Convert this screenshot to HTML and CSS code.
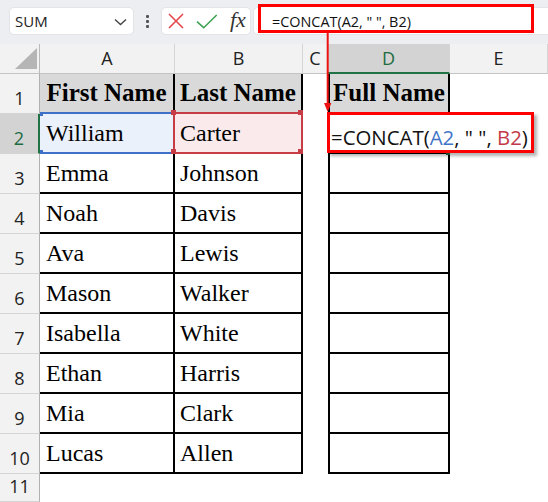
FILE: index.html
```html
<!DOCTYPE html>
<html>
<head>
<meta charset="utf-8">
<link rel="stylesheet" href="styles.css">
</head>
<body>
<div class="app">
  <div class="toolbar">
    <div class="namebox">
      <span>SUM</span>
      <svg class="chev" width="13" height="8" viewBox="0 0 13 8"><path d="M1 1.5 L6.5 6.5 L12 1.5" fill="none" stroke="#444" stroke-width="1.4"/></svg>
    </div>
    <div class="dots"><i></i><i></i><i></i></div>
    <div class="fxbox">
      <svg class="xi" width="16" height="16" viewBox="0 0 16 16"><path d="M1 1 L15 15 M15 1 L1 15" stroke="#e4474c" stroke-width="1.6"/></svg>
      <svg class="ok" width="22" height="15" viewBox="0 0 22 15"><path d="M1 7.7 L7.7 13.7 L20.7 1" fill="none" stroke="#3ea352" stroke-width="1.6"/></svg>
      <span class="fx">fx</span>
    </div>
    <div class="formula">
      <div class="fbox">=CONCAT(A2, " ", B2)</div>
    </div>
  </div>

  <div class="sheet">
    <div class="corner"><svg width="40" height="30" viewBox="0 0 40 30"><path d="M37 4 L37 25 L15 25 Z" fill="#b5b5b5"/></svg></div>
    <div class="ch">A</div>
    <div class="ch">B</div>
    <div class="ch">C</div>
    <div class="ch sel">D</div>
    <div class="ch">E</div>

    <div class="rh">1</div>
    <div class="cell ta hd a1">First Name</div>
    <div class="cell tb hd b1">Last Name</div>
    <div class="cell"></div>
    <div class="cell td hd">Full Name</div>
    <div class="cell"></div>

    <div class="rh rsel">2</div>
    <div class="cell ta a2">William<i class="bh btl"></i><i class="bh bbl"></i></div>
    <div class="cell tb b2">Carter<i class="h tl"></i><i class="h tr"></i><i class="h bl"></i><i class="h br"></i></div>
    <div class="cell"></div>
    <div class="cell td d2">
      <i class="fill"></i>
      <div class="callout">=CONCAT(<span class="rb">A2</span>, " ", <span class="rr">B2</span>)</div>
    </div>
    <div class="cell"></div>

    <div class="rh">3</div>
    <div class="cell ta">Emma</div>
    <div class="cell tb">Johnson</div>
    <div class="cell"></div>
    <div class="cell td"></div>
    <div class="cell"></div>

    <div class="rh">4</div>
    <div class="cell ta">Noah</div>
    <div class="cell tb">Davis</div>
    <div class="cell"></div>
    <div class="cell td"></div>
    <div class="cell"></div>

    <div class="rh">5</div>
    <div class="cell ta">Ava</div>
    <div class="cell tb">Lewis</div>
    <div class="cell"></div>
    <div class="cell td"></div>
    <div class="cell"></div>

    <div class="rh">6</div>
    <div class="cell ta">Mason</div>
    <div class="cell tb">Walker</div>
    <div class="cell"></div>
    <div class="cell td"></div>
    <div class="cell"></div>

    <div class="rh">7</div>
    <div class="cell ta">Isabella</div>
    <div class="cell tb">White</div>
    <div class="cell"></div>
    <div class="cell td"></div>
    <div class="cell"></div>

    <div class="rh">8</div>
    <div class="cell ta">Ethan</div>
    <div class="cell tb">Harris</div>
    <div class="cell"></div>
    <div class="cell td"></div>
    <div class="cell"></div>

    <div class="rh">9</div>
    <div class="cell ta">Mia</div>
    <div class="cell tb">Clark</div>
    <div class="cell"></div>
    <div class="cell td"></div>
    <div class="cell"></div>

    <div class="rh">10</div>
    <div class="cell ta">Lucas</div>
    <div class="cell tb">Allen</div>
    <div class="cell"></div>
    <div class="cell td"></div>
    <div class="cell"></div>

    <div class="rh">11</div>
    <div class="cell"></div>
    <div class="cell"></div>
    <div class="cell"></div>
    <div class="cell"></div>
    <div class="cell"></div>
  </div>

  <svg class="arrow" width="12" height="80" viewBox="0 0 12 80"><path d="M5.7 0 L5.7 72" stroke="#ee1111" stroke-width="2"/><path d="M2 70 L9.4 70 L5.7 79 Z" fill="#ee1111"/></svg>
</div>
</body>
</html>
```
FILE: styles.css
```css
html, body {
  margin: 0;
  padding: 0;
  background: #fff;
}
body {
  width: 548px;
  height: 502px;
  overflow: hidden;
  font-family: "Open Sans", "Noto Sans", sans-serif;
  color: #111;
}
.app {
  position: relative;
  width: 548px;
  height: 502px;
}

/* ---------- toolbar ---------- */
.toolbar {
  height: 44px;
  background: #eceef1;
  display: flex;
  align-items: flex-start;
}
.namebox {
  box-sizing: border-box;
  margin: 7px 0 0 9px;
  width: 125px;
  height: 28px;
  background: #fff;
  border: 1px solid #e2e4e7;
  border-radius: 5px;
  display: flex;
  align-items: center;
  padding-left: 5px;
  font-size: 15px;
  color: #222;
}
.chev {
  margin-left: auto;
  margin-right: 6px;
  margin-top: 1px;
}
.dots {
  margin: 15px 0 0 12px;
  display: flex;
  flex-direction: column;
  gap: 2px;
}
.dots i {
  display: block;
  width: 3px;
  height: 3px;
  background: #555;
  border-radius: 1px;
}
.fxbox {
  box-sizing: border-box;
  margin: 7px 0 0 12px;
  width: 90px;
  height: 28px;
  background: #fff;
  border: 1px solid #e2e4e7;
  border-radius: 5px;
  display: flex;
  align-items: center;
  padding-left: 6px;
}
.ok {
  margin-left: 12px;
}
.fx {
  margin-left: 12px;
  font-family: "Liberation Serif", "DejaVu Serif", serif;
  font-style: italic;
  font-size: 22px;
  line-height: 22px;
  color: #333;
  margin-top: -3px;
}
.formula {
  box-sizing: border-box;
  flex: 1;
  margin: 7px 0 0 2px;
  height: 28px;
  background: #fff;
  border: 1px solid #e2e4e7;
  border-right: 0;
  border-radius: 5px 0 0 5px;
}
.fbox {
  box-sizing: border-box;
  margin: -4px 0 0 4px;
  width: 276px;
  height: 29px;
  border: 3px solid #f00;
  background: #fff;
  padding: 7px 0 0 11px;
  font-size: 14.4px;
  line-height: 16px;
  color: #111;
  white-space: pre;
}

/* ---------- sheet ---------- */
.sheet {
  display: grid;
  grid-template-columns: 40px 135px 128px 25px 122px 98px;
  grid-template-rows: 30px repeat(10, 40px) 28px;
}
.corner {
  box-sizing: border-box;
  background: #f2f2f2;
  border-right: 1px solid #b9b9b9;
  border-bottom: 1px solid #c4c4c4;
  overflow: hidden;
}
.corner svg {
  display: block;
}
.ch {
  box-sizing: border-box;
  background: #f2f2f2;
  border-right: 1px solid #d5d5d5;
  border-bottom: 1px solid #c4c4c4;
  text-align: center;
  font-size: 18px;
  line-height: 29px;
  color: #222;
}
.ch.sel {
  background: #d3d3d3;
  color: #1d6b3f;
  border-bottom: 2px solid #217346;
  line-height: 28px;
}
.rh {
  box-sizing: border-box;
  background: #f2f2f2;
  border-right: 1px solid #b0b0b0;
  border-bottom: 1px solid #d5d5d5;
  display: flex;
  justify-content: center;
  align-items: flex-end;
  padding-bottom: 6px;
  font-size: 18px;
  line-height: 18px;
  color: #222;
}
.rh.rsel {
  background: #d3d3d3;
  color: #1d6b3f;
  border-right: 2px solid #217346;
}

.cell {
  box-sizing: border-box;
  display: flex;
  align-items: flex-end;
  font-family: "Liberation Serif", "Times New Roman", serif;
  font-size: 24px;
  line-height: 24px;
  padding-bottom: 7px;
  color: #000;
  white-space: nowrap;
}
.ta {
  border-right: 2px solid #000;
  border-bottom: 2px solid #000;
  padding-left: 6px;
}
.tb {
  border-right: 2px solid #000;
  border-bottom: 2px solid #000;
  padding-left: 5px;
}
.td {
  border-left: 2px solid #000;
  border-right: 2px solid #000;
  border-bottom: 2px solid #000;
  padding-left: 5px;
}
.hd {
  background: #d9d9d9;
  font-weight: bold;
  font-size: 25px;
  justify-content: center;
  padding-left: 0;
}

/* reference highlights */
.a1 { border-bottom-color: #3d70c6; }
.b1 { border-bottom-color: #c63d46; }
.a2 {
  position: relative;
  background: #ebf1fa;
  border-bottom-color: #3d70c6;
  border-right-color: #c63d46;
}
.b2 {
  position: relative;
  background: #fbeaeb;
  border-bottom-color: #c63d46;
  border-right-color: #c63d46;
}
.h {
  position: absolute;
  width: 5px;
  height: 5px;
  background: #c63d46;
}
.h.tl { left: -4px; top: -4px; }
.h.tr { right: -2px; top: -4px; }
.h.bl { left: -4px; bottom: -2px; }
.h.br { right: -2px; bottom: -2px; }
.bh {
  position: absolute;
  width: 3px;
  height: 4px;
  background: #3d70c6;
  left: 0;
}
.bh.btl { top: -2px; }
.bh.bbl { bottom: -2px; }

.d2 {
  position: relative;
}
.fill {
  position: absolute;
  right: -2px;
  bottom: -3px;
  width: 4px;
  height: 4px;
  background: #1e6b40;
}
.callout {
  position: absolute;
  left: -3px;
  top: -2px;
  box-sizing: border-box;
  width: 207px;
  height: 41px;
  border: 3px solid #f00;
  background: #fff;
  box-shadow: 3px 3px 3px rgba(0, 0, 0, 0.3);
  padding: 11px 0 0 1px;
  font-family: "Open Sans", "Noto Sans", sans-serif;
  font-size: 20.4px;
  line-height: 22px;
  color: #111;
  white-space: pre;
  z-index: 2;
}
.rb { color: #3f74c9; }
.rr { color: #c23a48; }

.arrow {
  position: absolute;
  left: 322px;
  top: 33px;
  z-index: 3;
}
```
